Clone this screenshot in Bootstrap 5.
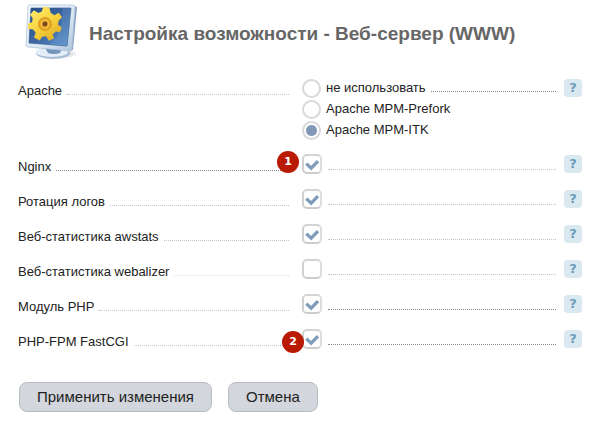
<!DOCTYPE html>
<html lang="ru">
<head>
<meta charset="utf-8">
<meta name="viewport" content="width=device-width, initial-scale=1">
<title>Настройка возможности - Веб-сервер (WWW)</title>
<link rel="stylesheet" href="https://cdn.jsdelivr.net/npm/bootstrap@5.3.0/dist/css/bootstrap.min.css">
<style>
body { font: 13px/16px "Liberation Sans", Arial, sans-serif; color: #222; background: #fff; }
.page { padding: 0 17px 12px 18px; }
.page-head { gap: 10px; padding: 3px 0 0 6px; }
.page-title { font-size: 19px; line-height: 24px; font-weight: 700; color: #666; }
.set-label { padding: 5px 11px 0 0; gap: 5px; }
.set-control { padding-left: 2px; gap: 6px; }
.set-row { min-height: 35px; padding-top: 7px; }
.apache-row { min-height: 69px; padding-top: 1px; margin-top: 17px; }
.apache-row .set-label { padding-top: 4px; }
.leader { height: 12px; border-bottom: 1px dotted #c4c4c4; }
.leader.strong { border-bottom-color: #888; }
.leader.pale { border-bottom-color: #ddd; }
.set-control .leader { height: 16px; margin-right: 2px; }
.option { gap: 5px; height: 21px; }
.option label { padding-top: 1px; }
.set-control .option .leader { height: 13px; }
.tick, .dot { appearance: none; flex: none; margin: 0; border: 2px solid #d9d9d9; background: #fff center/16px 16px no-repeat; }
.tick { width: 20px; height: 20px; border-radius: 5px; border-color: #d4d4d4 #ddd #ccc #d0d0d0; }
.tick:checked { background-image: url("data:image/svg+xml,%3Csvg xmlns='http://www.w3.org/2000/svg' viewBox='0 0 16 16'%3E%3Cpath d='M2.3 7.6 7.2 12.2 14 5.2' fill='none' stroke='%237f9dba' stroke-width='3.3'/%3E%3C/svg%3E"); }
.dot { width: 19px; height: 19px; border-radius: 50%; }
.dot:checked { background-image: radial-gradient(circle, #8199b7 5px, transparent 6px); background-size: 15px 15px; }
.help { flex: none; width: 18px; height: 18px; padding: 0; border: 0; border-radius: 4px; background: #dae8ef; color: #6b9cbb; font: bold 13px/18px "DejaVu Sans", sans-serif; }
.set-row .help { margin-top: 1px; }
.step { position: absolute; width: 22px; height: 22px; border-radius: 50%; background: #b81a03; color: #fff; font: bold 11px/22px "DejaVu Sans", sans-serif; text-align: center; }
.step-one { left: -23px; top: -3px; }
.step-two { left: -18px; top: 2px; }
.actions { gap: 16px; padding: 25px 0 0 1px; }
.action { height: 30px; padding: 0 17px; border: 1px solid #b8bcc0; border-radius: 8px; background: #d3d6dc; color: #222; font-size: 15px; line-height: 28px; }
</style>
<script defer src="https://cdn.jsdelivr.net/npm/bootstrap@5.3.0/dist/js/bootstrap.bundle.min.js"></script>
</head>
<body>
<main class="page">
  <header class="page-head d-flex align-items-center">
    <svg width="55" height="58" viewBox="0 0 55 58" aria-hidden="true">
      <defs>
        <linearGradient id="screen" x1="0" y1="0" x2="1" y2="1"><stop stop-color="#234b83"/><stop offset=".5" stop-color="#3c66a2"/><stop offset="1" stop-color="#5c93cc"/></linearGradient>
        <linearGradient id="frame" x1="0" y1="0" x2="1" y2="1"><stop stop-color="#f6f9fd"/><stop offset=".6" stop-color="#dbe7f4"/><stop offset="1" stop-color="#a9c0da"/></linearGradient>
        <linearGradient id="gold" x1="0" y1="0" x2="1" y2="1"><stop stop-color="#fff078"/><stop offset=".5" stop-color="#f9d33e"/><stop offset="1" stop-color="#d9a51f"/></linearGradient>
        <radialGradient id="shade"><stop stop-color="#7e858d" stop-opacity=".7"/><stop offset="1" stop-color="#7e858d" stop-opacity="0"/></radialGradient>
      </defs>
      <ellipse cx="35" cy="51" rx="19" ry="5" fill="url(#shade)"/>
      <ellipse cx="29" cy="50" rx="17" ry="6" fill="#a6bdd6"/>
      <ellipse cx="28" cy="49" rx="16" ry="5" fill="#e5eef8"/>
      <path d="M20 43h19l-3 7q-6 2-12 0z" fill="#7393b8"/>
      <path d="M50 3l3 1-4 43-4 1z" fill="#87a2c2"/>
      <path d="M5 2Q4 2 4 4L2 42q0 2 2 2l42 4q2 0 2-2L51 4q0-2-2-2z" fill="url(#frame)" stroke="#a9bfd8" stroke-width=".7"/>
      <path d="M7 5 5 40l38 3 4-38z" fill="url(#screen)" stroke="#375e92" stroke-width=".7"/>
      <path d="M38 5h9l-4 38-18-1.500q15-11 13-36.500z" fill="#8cb8e3" opacity=".2"/>
      <g transform="translate(21 21) rotate(8)" fill="url(#gold)">
        <path d="M-4-17 2-17 4-12 8-10 12-13 16-9 13-5 13-1 17 1 16 6 12 6 9 9 11 13 6 16 3 12-1 13-3 17-9 15-8 10-11 7-16 7-17 2-13 0-13-4-16-7-13-12-8-10-5-12Z"/>
        <circle r="7" fill="#dc9f24"/>
        <circle r="5" fill="#f1b93a"/>
        <circle r="2.500" fill="#7c481b"/>
      </g>
    </svg>
    <h1 class="page-title mb-0 pt-1">Настройка возможности - Веб-сервер (WWW)</h1>
  </header>

  <form>
    <div class="row g-0 apache-row" role="radiogroup" aria-labelledby="apache">
      <div class="col-6 d-flex set-label align-items-start"><span id="apache">Apache</span><span class="leader flex-fill"></span></div>
      <div class="col-6 d-flex set-control align-items-start">
        <div class="flex-fill">
          <div class="d-flex option"><input class="dot" type="radio" name="apache" id="a0"><label for="a0">не использовать</label><span class="leader strong flex-fill"></span></div>
          <div class="d-flex option"><input class="dot" type="radio" name="apache" id="a1"><label for="a1">Apache MPM-Prefork</label></div>
          <div class="d-flex option"><input class="dot" type="radio" name="apache" id="a2" checked><label for="a2">Apache MPM-ITK</label></div>
        </div>
        <button type="button" class="help" aria-label="Справка: Apache">?</button>
      </div>
    </div>
    <div class="row g-0 set-row">
      <div class="col-6 d-flex set-label"><label for="nginx">Nginx</label><span class="leader strong flex-fill"></span></div>
      <div class="col-6 d-flex set-control position-relative"><input class="tick" type="checkbox" id="nginx" checked><span class="leader flex-fill"></span><button type="button" class="help">?</button><span class="step step-one">1</span></div>
    </div>
    <div class="row g-0 set-row">
      <div class="col-6 d-flex set-label"><label for="logs">Ротация логов</label><span class="leader flex-fill"></span></div>
      <div class="col-6 d-flex set-control"><input class="tick" type="checkbox" id="logs" checked><span class="leader flex-fill"></span><button type="button" class="help">?</button></div>
    </div>
    <div class="row g-0 set-row">
      <div class="col-6 d-flex set-label"><label for="awstats">Веб-статистика awstats</label><span class="leader flex-fill"></span></div>
      <div class="col-6 d-flex set-control"><input class="tick" type="checkbox" id="awstats" checked><span class="leader flex-fill"></span><button type="button" class="help">?</button></div>
    </div>
    <div class="row g-0 set-row">
      <div class="col-6 d-flex set-label"><label for="webalizer">Веб-статистика webalizer</label><span class="leader pale flex-fill"></span></div>
      <div class="col-6 d-flex set-control"><input class="tick" type="checkbox" id="webalizer"><span class="leader flex-fill"></span><button type="button" class="help">?</button></div>
    </div>
    <div class="row g-0 set-row">
      <div class="col-6 d-flex set-label"><label for="php">Модуль PHP</label><span class="leader flex-fill"></span></div>
      <div class="col-6 d-flex set-control"><input class="tick" type="checkbox" id="php" checked><span class="leader strong flex-fill"></span><button type="button" class="help">?</button></div>
    </div>
    <div class="row g-0 set-row">
      <div class="col-6 d-flex set-label"><label for="fpm">PHP-FPM FastCGI</label><span class="leader flex-fill"></span></div>
      <div class="col-6 d-flex set-control position-relative"><input class="tick" type="checkbox" id="fpm" checked><span class="leader strong flex-fill"></span><button type="button" class="help">?</button><span class="step step-two">2</span></div>
    </div>
    <div class="d-flex actions">
      <button type="submit" class="action">Применить изменения</button>
      <button type="button" class="action">Отмена</button>
    </div>
  </form>
</main>
</body>
</html>
